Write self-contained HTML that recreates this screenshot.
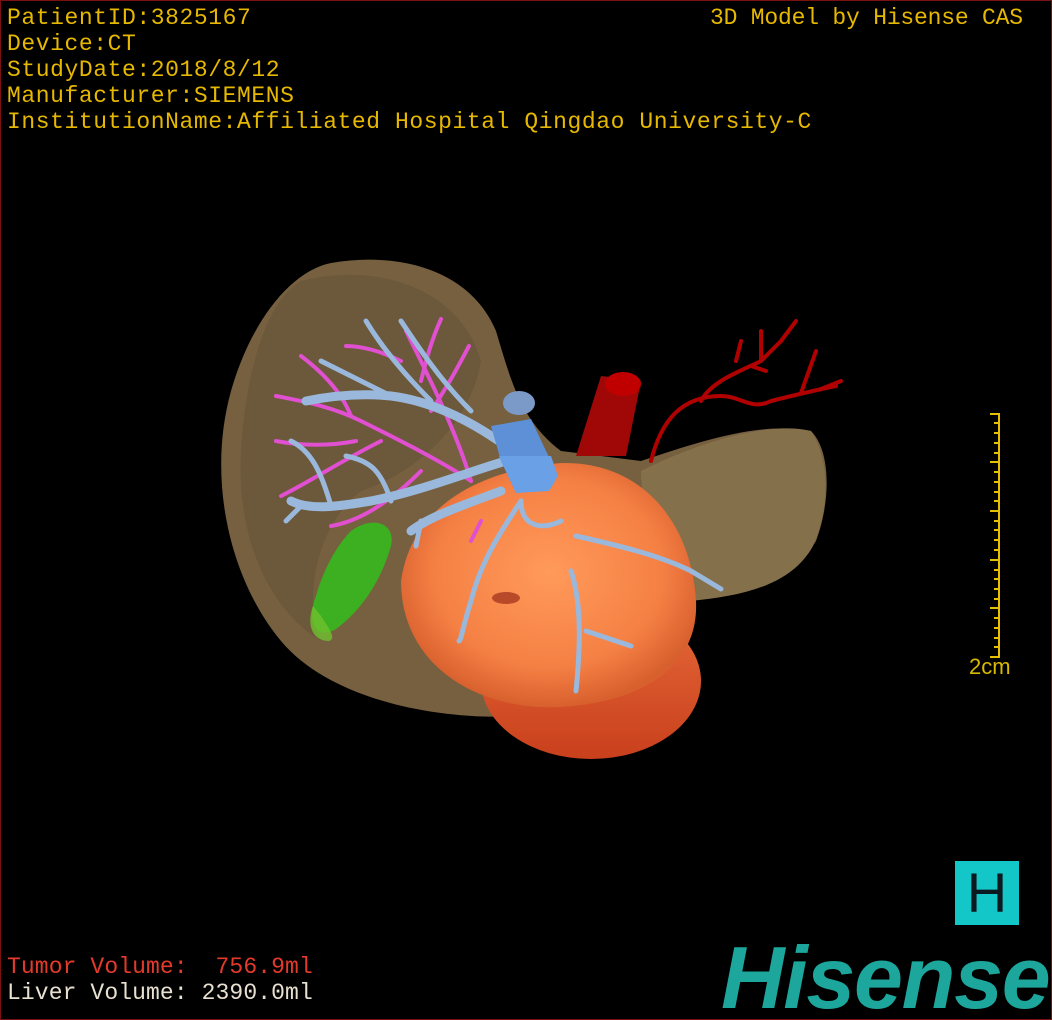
<!DOCTYPE html>
<html><head><meta charset="utf-8"><style>
html,body{margin:0;padding:0;background:#000}
#w{position:relative;width:1050px;height:1018px;border:1px solid #7a1010;background:#000;overflow:hidden}
.t{position:absolute;font-family:"Liberation Mono",monospace;font-size:23px;letter-spacing:0.57px;color:#e6b800;white-space:pre;line-height:26px}
svg{position:absolute;left:0;top:0}
</style></head><body><div id="w">
<svg width="1050" height="1018" viewBox="0 0 1050 1018">
<defs>
<radialGradient id="tg" cx="0.5" cy="0.45" r="0.55"><stop offset="0" stop-color="#ff9a5a"/><stop offset="0.7" stop-color="#f58044"/><stop offset="1" stop-color="#d8602e"/></radialGradient>
<linearGradient id="bg" x1="0" y1="0" x2="0" y2="1"><stop offset="0" stop-color="#e86a3a"/><stop offset="1" stop-color="#c8401c"/></linearGradient>
</defs>
<path d="M330 262 C400 250 470 270 495 330 C510 380 520 420 560 450 L640 460 C700 440 760 420 810 430 C830 450 830 500 815 540 C790 580 760 590 720 590 L690 600 C680 660 620 700 520 715 C440 720 330 700 280 640 C230 580 205 480 230 390 C250 320 290 270 330 262 Z" fill="#76603f"/>
<path d="M300 280 C380 260 460 290 480 360 C470 420 420 470 360 490 C320 520 300 590 320 640 C270 610 235 540 240 450 C245 370 265 300 300 280Z" fill="#5d4a30" opacity="0.35"/>
<path d="M640 470 C700 440 770 420 810 430 C830 460 828 510 812 545 C790 585 740 595 690 600 C660 560 640 510 640 470Z" fill="#85704c"/>
<ellipse cx="590" cy="680" rx="110" ry="78" fill="url(#bg)"/>
<path d="M400 580 C410 510 470 470 560 462 C640 460 690 520 695 600 C698 660 650 700 560 706 C470 710 400 660 400 580Z" fill="url(#tg)"/>
<ellipse cx="505" cy="597" rx="14" ry="6" fill="#b84a2a"/>
<path d="M350 530 C370 515 395 520 390 545 C380 580 360 610 335 628 C315 640 305 620 315 595 C322 570 335 545 350 530Z" fill="#3cb020"/>
<path d="M320 615 C330 630 335 638 328 640 C312 640 305 625 312 605Z" fill="#6fc030" opacity="0.8"/>
<path d="M600 375 L640 380 L625 455 L575 455 Z" fill="#a00808"/>
<ellipse cx="622" cy="383" rx="18" ry="12" fill="#c00000"/>
<g stroke="#b00000" stroke-width="4" fill="none" stroke-linecap="round">
<path d="M650 460 C660 420 680 395 720 395 C740 395 750 410 770 400 C790 395 810 390 835 385"/>
<path d="M700 400 C710 380 740 370 760 360 L780 340"/>
<path d="M760 360 L760 330 M780 340 L795 320 M800 392 L815 350 M820 388 L840 380"/>
<path d="M735 360 L740 340 M750 365 L765 370"/>
</g>
<g stroke="#e050d0" stroke-width="4" fill="none" stroke-linecap="round">
<path d="M470 480 C440 460 400 440 360 420 C330 405 300 400 275 395"/>
<path d="M470 480 C455 430 430 380 405 330"/>
<path d="M430 410 C450 380 460 360 468 345"/>
<path d="M380 440 C340 460 310 480 280 495"/>
<path d="M420 470 C390 500 360 520 330 525"/>
<path d="M300 355 C320 370 340 390 350 415 M440 318 C430 340 425 360 420 380"/>
<path d="M275 440 C300 445 330 445 355 440 M400 360 C380 350 360 345 345 345"/>
<path d="M480 520 L470 540"/>
</g>
<g stroke="#9ab8dc" stroke-width="9" fill="none" stroke-linecap="round">
<path d="M505 445 C470 420 430 400 390 395 C360 392 330 395 305 400"/>
<path d="M505 460 C470 470 420 490 370 500 C340 505 310 510 290 500"/>
<path d="M500 490 C460 505 430 515 410 530"/>
</g>
<g stroke="#9ab8dc" stroke-width="5" fill="none" stroke-linecap="round">
<path d="M470 410 C440 380 420 350 400 320 M430 400 C400 370 380 345 365 320 M390 395 C360 380 340 370 320 360"/>
<path d="M390 500 C380 470 370 460 345 455 M330 505 C320 470 310 450 290 440 M300 505 L285 520"/>
<path d="M520 500 C500 530 480 560 470 600 C462 625 460 640 458 640"/>
<path d="M520 500 C520 525 540 530 560 520"/>
<path d="M575 535 C620 545 660 555 690 570 L720 588"/>
<path d="M570 570 C580 600 580 640 575 690 M585 630 L630 645"/>
<path d="M420 520 L415 545"/>
</g>
<path d="M490 425 L530 418 L545 450 L555 470 L545 488 L515 492 L500 460 Z" fill="#5e90d8"/>
<ellipse cx="518" cy="402" rx="16" ry="12" fill="#7c9ac8"/>
<path d="M498 455 L550 455 L557 475 L548 490 L515 492 Z" fill="#6aa0e6"/>
</svg>
<div class="t" style="left:6px;top:4px">PatientID:3825167<br>Device:CT<br>StudyDate:2018/8/12<br>Manufacturer:SIEMENS<br>InstitutionName:Affiliated Hospital Qingdao University-C</div>
<div class="t" style="left:709px;top:4px;letter-spacing:-0.2px">3D Model by Hisense CAS</div>
<div class="t" style="left:6px;top:953px;color:#e43a2c;letter-spacing:0.1px">Tumor Volume:  756.9ml</div>
<div class="t" style="left:6px;top:979px;color:#e8e0d0;letter-spacing:0.1px">Liver Volume: 2390.0ml</div>
<div style="position:absolute;left:997px;top:412px;width:2px;height:245px;background:#e6c000"></div>
<svg width="1050" height="1018" style="pointer-events:none">
<g stroke="#e6c000" stroke-width="2">
<line x1="989" y1="413" x2="998" y2="413"/><line x1="993" y1="422" x2="998" y2="422"/><line x1="993" y1="432" x2="998" y2="432"/><line x1="993" y1="442" x2="998" y2="442"/><line x1="993" y1="452" x2="998" y2="452"/>
<line x1="989" y1="461" x2="998" y2="461"/><line x1="993" y1="471" x2="998" y2="471"/><line x1="993" y1="481" x2="998" y2="481"/><line x1="993" y1="491" x2="998" y2="491"/><line x1="993" y1="500" x2="998" y2="500"/>
<line x1="989" y1="510" x2="998" y2="510"/><line x1="993" y1="520" x2="998" y2="520"/><line x1="993" y1="529" x2="998" y2="529"/><line x1="993" y1="539" x2="998" y2="539"/><line x1="993" y1="549" x2="998" y2="549"/>
<line x1="989" y1="559" x2="998" y2="559"/><line x1="993" y1="569" x2="998" y2="569"/><line x1="993" y1="578" x2="998" y2="578"/><line x1="993" y1="588" x2="998" y2="588"/><line x1="993" y1="598" x2="998" y2="598"/>
<line x1="989" y1="607" x2="998" y2="607"/><line x1="993" y1="617" x2="998" y2="617"/><line x1="993" y1="627" x2="998" y2="627"/><line x1="993" y1="637" x2="998" y2="637"/><line x1="993" y1="646" x2="998" y2="646"/><line x1="989" y1="656" x2="998" y2="656"/>
</g></svg>
<div style="position:absolute;left:968px;top:653px;font-family:'Liberation Sans',sans-serif;font-size:22px;color:#d8b800">2cm</div>
<div style="position:absolute;left:954px;top:860px;width:64px;height:64px;background:#13c6c8;color:#0a1a20;font-family:'Liberation Sans',sans-serif;font-size:56px;line-height:64px;text-align:center">H</div>
<div style="position:absolute;left:720px;top:932px;font-family:'Liberation Sans',sans-serif;font-weight:bold;font-style:italic;font-size:88px;line-height:90px;color:#1ca69c;letter-spacing:-1.3px;white-space:nowrap">Hisense</div>
</div></body></html>
